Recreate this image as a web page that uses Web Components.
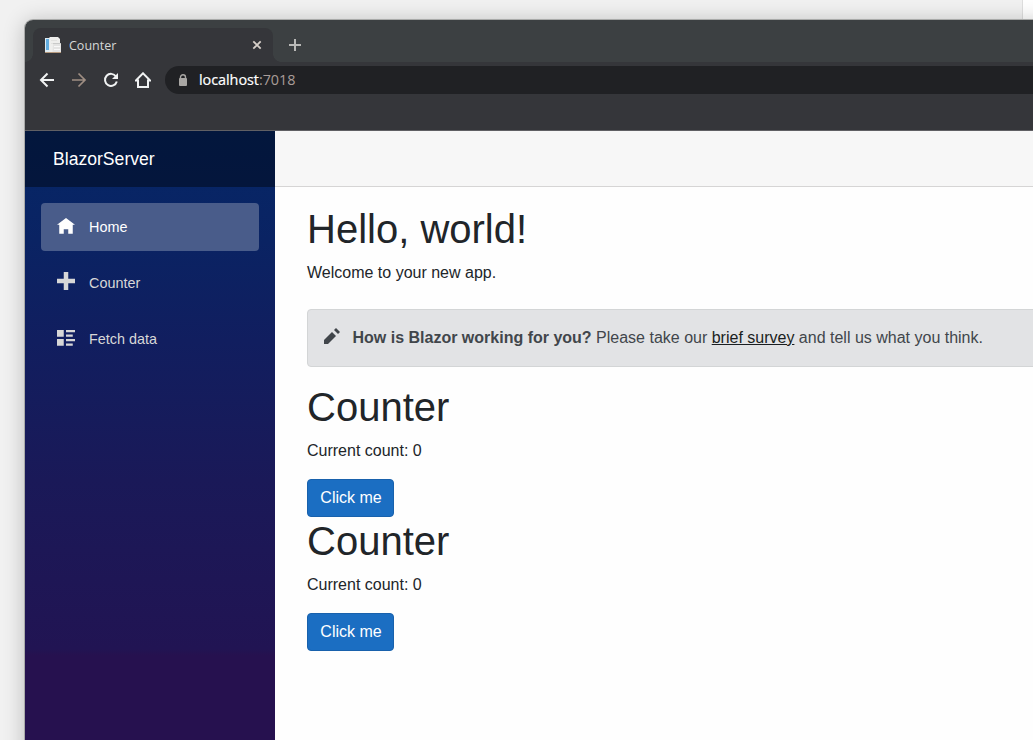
<!DOCTYPE html>
<html lang="en">
<head>
<meta charset="utf-8">
<title>Counter</title>
<style>
body { margin: 0; overflow: hidden; background: #f0f1f1; font-family: "Liberation Sans", Arial, sans-serif; }
</style>
</head>
<body>
<desktop-view>
  <browser-window>
    <tab-strip slot="chrome"><browser-tab>Counter</browser-tab></tab-strip>
    <tool-bar slot="chrome"><span slot="host">localhost</span><span slot="port">:7018</span></tool-bar>
    <side-bar slot="page" brand="BlazorServer">
      <nav-item icon="home" active>Home</nav-item>
      <nav-item icon="plus">Counter</nav-item>
      <nav-item icon="list">Fetch data</nav-item>
    </side-bar>
    <page-main slot="page">
      <page-intro heading="Hello, world!">Welcome to your new app.</page-intro>
      <survey-prompt>How is Blazor working for you?</survey-prompt>
      <click-counter></click-counter>
      <click-counter></click-counter>
    </page-main>
  </browser-window>
</desktop-view>
<script>
const ICONS = {
  home: 'M4 0l-4 3h1v4h2v-2h2v2h2v-4.03l1 .03-4-3z',
  plus: 'M3 0v3h-3v2h3v3h2v-3h3v-2h-3v-3h-2z',
  list: 'M0 0v3h3v-3h-3zm4 0v1h4v-1h-4zm0 2v1h3v-1h-3zm-4 2v3h3v-3h-3zm4 0v1h4v-1h-4zm0 2v1h3v-1h-3z',
  pencil: 'M6 0l-1 1 2 2 1-1-2-2zm-2 2l-4 4v2h2l4-4-2-2z'
};
const glyph = (name, size) => `<svg width="${size}" height="${size}" viewBox="0 0 8 8" fill="currentColor"><path d="${ICONS[name]}"/></svg>`;

function define(tag, render) {
  customElements.define(tag, class extends HTMLElement {
    connectedCallback() {
      if (this.shadowRoot) return;
      this.attachShadow({ mode: 'open' }).innerHTML = render(this);
    }
  });
}

define('desktop-view', () => `
<style>
:host { display: block; box-sizing: border-box; width: 1033px; height: 740px; padding: 20px 0 0 25px; overflow: hidden;
  background: linear-gradient(90deg, transparent 1022px, #dedede 1022px 1023px, #fff 1023px), #f1f1f1; }
</style><slot></slot>`);

define('browser-window', () => `
<style>
:host { display: flex; flex-direction: column; width: 1100px; height: 800px; border-radius: 8px 0 0 0; background: #fefefe;
  box-shadow: 0 0 0 1px #a9aaa9, 0 2px 22px rgba(0,0,0,.24); }
.page { display: flex; flex: 1; }
</style>
<slot name="chrome"></slot><div class="page"><slot name="page"></slot></div>`);

define('tab-strip', () => `
<style>
:host { display: flex; height: 42px; box-sizing: border-box; padding: 8px 0 0 8px; background: #3c4042; border-radius: 8px 0 0 0; }
svg { margin: 10px 0 0 15px; }
</style>
<slot></slot>
<svg width="14" height="14" fill="none" stroke="#b9b9b7" stroke-width="2"><path d="M7 1v12M1 7h12"/></svg>`);

define('browser-tab', () => `
<style>
:host { position: relative; display: flex; align-items: center; width: 240px; height: 34px; box-sizing: border-box; padding: 0 10px 0 12px;
  border-radius: 8px 8px 0 0; background: #35363a; color: #d5d6d6; font: 12.5px/18px "Open Sans", "Noto Sans", sans-serif; }
:host::before, :host::after { content: ""; position: absolute; bottom: 0; width: 8px; height: 8px; }
:host::before { left: -8px; background: radial-gradient(circle at 0 0, transparent 7.5px, #35363a 8px); }
:host::after { right: -8px; background: radial-gradient(circle at 100% 0, transparent 7.5px, #35363a 8px); }
.name { flex: 1; margin-left: 8px; padding-top: 1px; }
.close { margin-right: 1px; }
</style>
<svg width="16" height="16">
  <path d="M0 1h5v15H0z" fill="#deebf2"/><path d="M1 2h3v11H1z" fill="#62ade0"/><path d="M0 15h16v1H0z" fill="#b79a7e"/>
  <path d="M4.500 0H13l2 2v13H4.500z" fill="#efefed"/><path d="M6 3.500h6M6 6.500h3" stroke="#e2e2e0"/>
  <path d="M8 7h8v8H7.500z" fill="#e4e4e3"/><path d="M9 9.500h6M9 12.500h6" stroke="#f8f8f8"/><path d="M8 6.500h8" stroke="#c9cac9"/>
</svg>
<span class="name"><slot></slot></span>
<svg class="close" width="10" height="10" fill="none" stroke="#d7d0c9" stroke-width="1.800"><path d="M1.300 1.300l7.400 7.400M8.700 1.300l-7.400 7.400"/></svg>`);

define('tool-bar', () => `
<style>
:host { display: flex; box-sizing: border-box; height: 69px; padding: 4px 0 0 14px; background: #35363a; border-bottom: 1px solid #606064; color: #f1f3f3; }
.buttons { display: flex; gap: 16px; padding-top: 6px; height: 16px; }
.buttons svg { fill: none; stroke: currentColor; stroke-width: 2; }
.buttons .next { color: #9f8e83; stroke-width: 1.700; }
.address { display: flex; align-items: center; flex: 1; height: 28px; margin-left: 14px; padding-left: 13px; border-radius: 14px 0 0 14px; background: #202124; }
.text { margin-left: 11px; font: 14.4px/20px "Open Sans", "Noto Sans", sans-serif; letter-spacing: -.04px; color: #fff; white-space: nowrap; -webkit-text-stroke: .2px; }
.port { color: #a99c98; -webkit-text-stroke: 0; }
</style>
<div class="buttons">
  <svg width="16" height="16"><path d="M15 8H2.500M8.500 1.500L2 8l6.500 6.500"/></svg>
  <svg class="next" width="16" height="16"><path d="M1 8h12.500M7.500 1.500L14 8l-6.500 6.500"/></svg>
  <svg width="16" height="16"><path d="M13 4.500A6 6 0 1 0 13.800 9.500"/><path d="M15 1v6H9z" fill="currentColor" stroke="none"/></svg>
  <svg width="16" height="16"><path d="M.8 8.500H3V15h10V8.500h2.200L8 1.300z"/></svg>
</div>
<div class="address">
  <svg width="10" height="13"><path d="M2.500 5V3.300a2.500 2.500 0 0 1 5 0V5" fill="none" stroke="#a9a7a4" stroke-width="1.400"/><rect x="1" y="4" width="8" height="8" rx="1" fill="#a9a7a4"/></svg>
  <span class="text"><slot name="host"></slot><span class="port"><slot name="port"></slot></span></span>
</div>`);

define('side-bar', el => `
<style>
:host { display: block; width: 250px; background: linear-gradient(180deg, #052767 0, #0a2363 110px, #111e5f 210px, #1a1958 350px, #211453 518px, #26114f 524px, #26114f 100%); }
.brand { box-sizing: border-box; height: 56px; padding-left: 28px; background: rgba(0,0,0,.4); color: #fff; font-size: 17.6px; line-height: 57px; }
nav { display: grid; gap: 8px; padding: 16px; }
</style>
<div class="brand">${el.getAttribute('brand')}</div><nav><slot></slot></nav>`);

define('nav-item', el => `
<style>
:host { display: flex; align-items: center; height: 48px; border-radius: 4px; color: #d7d7d7; font-size: 14.4px; }
:host([active]) { background: #495c8a; color: #fff; }
svg { margin: 0 14px 0 16px; }
:host([icon="plus"]) svg { margin-top: -4px; }
</style>
${glyph(el.getAttribute('icon'), 18)}<slot></slot>`);

define('page-main', () => `
<style>
:host { display: block; flex: 1; color: #212529; font-size: 16px; line-height: 24px; }
header { box-sizing: border-box; height: 56px; background: #f7f7f7; border-bottom: 1px solid #d6d5d5; }
main { padding: 18px 24px 0 32px; }
</style>
<header></header><main><slot></slot></main>`);

const heading = 'h1 { margin: 0 0 8px; font-size: 40px; font-weight: 400; line-height: 48px; } p { margin: 0 0 16px; } :host { display: block; }';

define('page-intro', el => `<style>${heading}</style><h1>${el.getAttribute('heading')}</h1><p><slot></slot></p>`);

define('survey-prompt', () => `
<style>
:host { display: flex; align-items: center; box-sizing: border-box; height: 58px; margin: 24px 0 16px; padding: 0 16px; border: 1px solid #d3d5d6; border-radius: 4px; background: #e2e3e5; color: #41464b; white-space: nowrap; }
svg { margin: -4px 12.5px 0 0; }
a { color: #1a1e21; text-decoration: underline; }
</style>
${glyph('pencil', 16)}<span><strong><slot></slot></strong> Please take our <a>brief survey</a> and tell us what you think.</span>`);

define('click-counter', () => `
<style>${heading}
button { display: block; box-sizing: border-box; width: 87px; height: 38px; padding: 0 0 0 1px; border: 1px solid #1861ac; border-radius: 4px; background: #1b6ec2; color: #fff; font: inherit; white-space: nowrap; }
</style>
<h1>Counter</h1><p>Current count: 0</p><button>Click me</button>`);
</script>
</body>
</html>
